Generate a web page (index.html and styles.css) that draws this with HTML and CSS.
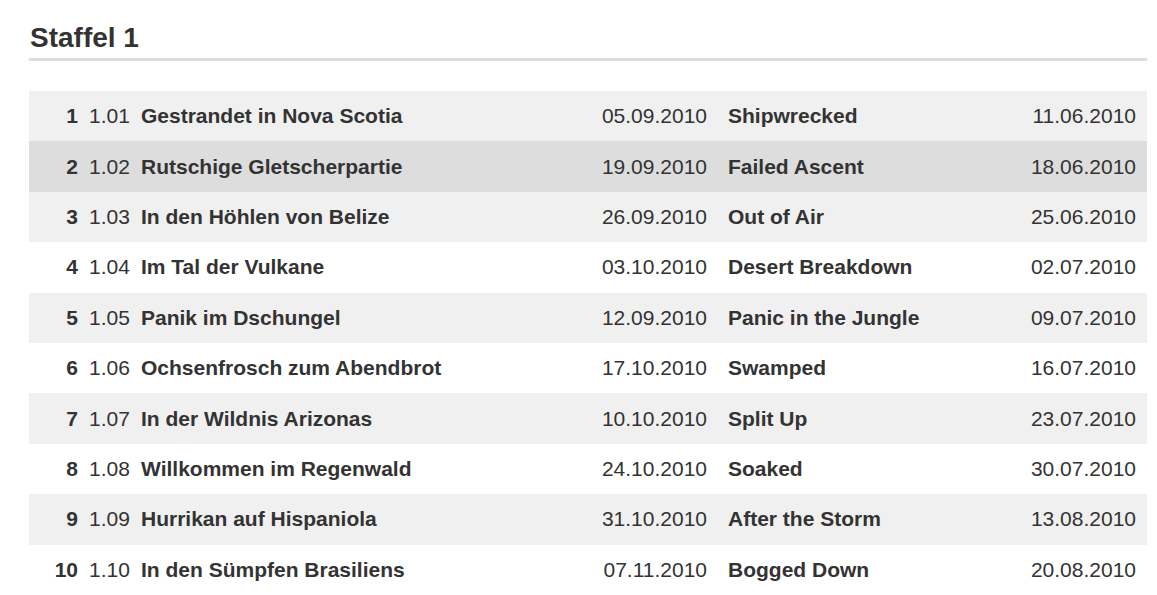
FILE: index.html
```html
<!DOCTYPE html>
<html lang="de">
<head>
<meta charset="utf-8">
<title>Staffel 1</title>
<link rel="stylesheet" href="styles.css">
</head>
<body>
<section class="season">
  <h2 class="season-title">Staffel 1</h2>
  <table class="episodes">
    <colgroup>
      <col class="c-no">
      <col class="c-code">
      <col class="c-title">
      <col class="c-date">
      <col class="c-orig">
      <col class="c-odate">
    </colgroup>
    <tbody>
      <tr><td class="no">1</td><td class="code">1.01</td><td class="title">Gestrandet in Nova Scotia</td><td class="date">05.09.2010</td><td class="orig">Shipwrecked</td><td class="odate">11.06.2010</td></tr>
      <tr class="active"><td class="no">2</td><td class="code">1.02</td><td class="title">Rutschige Gletscherpartie</td><td class="date">19.09.2010</td><td class="orig">Failed Ascent</td><td class="odate">18.06.2010</td></tr>
      <tr><td class="no">3</td><td class="code">1.03</td><td class="title">In den Höhlen von Belize</td><td class="date">26.09.2010</td><td class="orig">Out of Air</td><td class="odate">25.06.2010</td></tr>
      <tr><td class="no">4</td><td class="code">1.04</td><td class="title">Im Tal der Vulkane</td><td class="date">03.10.2010</td><td class="orig">Desert Breakdown</td><td class="odate">02.07.2010</td></tr>
      <tr><td class="no">5</td><td class="code">1.05</td><td class="title">Panik im Dschungel</td><td class="date">12.09.2010</td><td class="orig">Panic in the Jungle</td><td class="odate">09.07.2010</td></tr>
      <tr><td class="no">6</td><td class="code">1.06</td><td class="title">Ochsenfrosch zum Abendbrot</td><td class="date">17.10.2010</td><td class="orig">Swamped</td><td class="odate">16.07.2010</td></tr>
      <tr><td class="no">7</td><td class="code">1.07</td><td class="title">In der Wildnis Arizonas</td><td class="date">10.10.2010</td><td class="orig">Split Up</td><td class="odate">23.07.2010</td></tr>
      <tr><td class="no">8</td><td class="code">1.08</td><td class="title">Willkommen im Regenwald</td><td class="date">24.10.2010</td><td class="orig">Soaked</td><td class="odate">30.07.2010</td></tr>
      <tr><td class="no">9</td><td class="code">1.09</td><td class="title">Hurrikan auf Hispaniola</td><td class="date">31.10.2010</td><td class="orig">After the Storm</td><td class="odate">13.08.2010</td></tr>
      <tr><td class="no">10</td><td class="code">1.10</td><td class="title">In den Sümpfen Brasiliens</td><td class="date">07.11.2010</td><td class="orig">Bogged Down</td><td class="odate">20.08.2010</td></tr>
    </tbody>
  </table>
</section>
</body>
</html>
```
FILE: styles.css
```css
html, body {
  margin: 0;
  padding: 0;
  background: #ffffff;
}

body {
  font-family: "Liberation Sans", Arial, sans-serif;
  color: #333333;
}

.season {
  padding: 22px 10px 0 29px;
}

.season-title {
  margin: 0;
  padding: 0 0 4px 1px;
  font-size: 28px;
  font-weight: bold;
  line-height: 32px;
  color: #333333;
  border-bottom: 3px solid #dddddd;
}

.episodes {
  margin-top: 30px;
  width: 100%;
  border-collapse: collapse;
  table-layout: fixed;
  font-size: 21px;
}

.c-no { width: 55px; }
.c-code { width: 52px; }
.c-title { width: 454px; }
.c-date { width: 122px; }
.c-orig { width: 298px; }
.c-odate { width: 137px; }

.episodes tr {
  background: #ffffff;
}

.episodes tr:nth-child(odd) {
  background: #f0f0f0;
}

.episodes tr.active {
  background: #dddddd;
}

.episodes td {
  height: 50.4px;
  padding: 0;
  vertical-align: middle;
  white-space: nowrap;
  line-height: 24px;
}

.no {
  text-align: right;
  font-weight: bold;
  padding-right: 6px !important;
}

.code {
  padding-left: 5px !important;
}

.title {
  font-weight: bold;
  padding-left: 5px !important;
}

.date {
  text-align: right;
  padding-right: 5px !important;
}

.orig {
  font-weight: bold;
  padding-left: 16px !important;
}

.odate {
  text-align: right;
  padding-right: 11px !important;
}
```
